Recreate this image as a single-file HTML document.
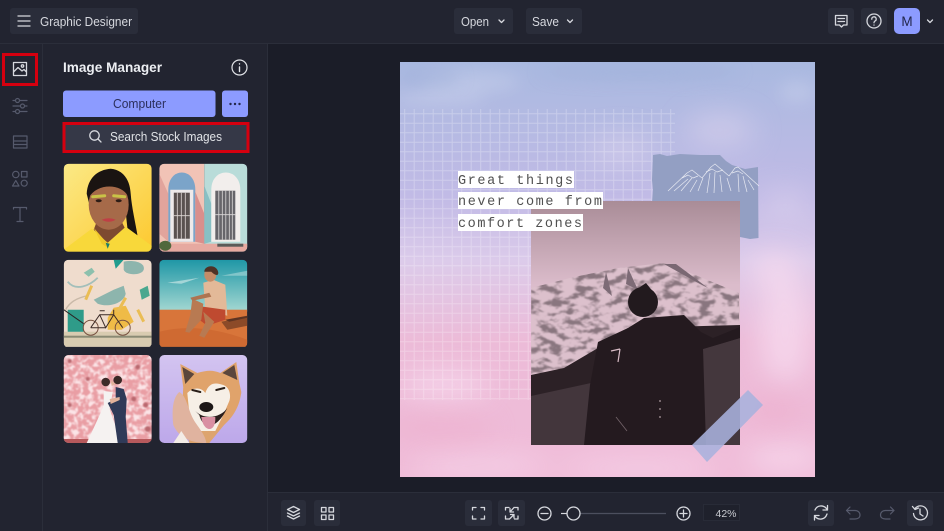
<!DOCTYPE html>
<html><head><meta charset="utf-8"><style>
html,body{margin:0;padding:0;background:#1b1d28;width:944px;height:531px;overflow:hidden}
svg{display:block}
text{font-family:"Liberation Sans",sans-serif}
.i{fill:none;stroke:#d6d8de;stroke-width:1.3;stroke-linecap:round;stroke-linejoin:round}
.d{fill:none;stroke:#565a6c;stroke-width:1.2;stroke-linecap:round;stroke-linejoin:round}
.b{fill:#2a2d3a}
</style></head><body>
<svg width="944" height="531" viewBox="0 0 944 531" xmlns="http://www.w3.org/2000/svg">
<defs>
<linearGradient id="bg" x1="0" y1="0" x2="0" y2="1"><stop offset="0" stop-color="#a9b9e0"/><stop offset=".33" stop-color="#c2bbe6"/><stop offset=".48" stop-color="#dccbea"/><stop offset=".67" stop-color="#ecbbd8"/><stop offset="1" stop-color="#f0bcd8"/></linearGradient>
<linearGradient id="ph" gradientUnits="userSpaceOnUse" x1="0" y1="201" x2="0" y2="285"><stop offset="0" stop-color="#a98c97"/><stop offset="1" stop-color="#dbbccb"/></linearGradient>
<linearGradient id="y1" x1="0" y1="0" x2="1" y2="1"><stop offset="0" stop-color="#fbe986"/><stop offset="1" stop-color="#fdc92f"/></linearGradient>
<linearGradient id="sky" x1="0" y1="0" x2="0" y2="1"><stop offset="0" stop-color="#1f97a6"/><stop offset="1" stop-color="#a5d8d2"/></linearGradient>
<linearGradient id="lav" x1="0" y1="0" x2="0" y2="1"><stop offset="0" stop-color="#d3c4f0"/><stop offset="1" stop-color="#bda8ea"/></linearGradient>
<pattern id="grid" width="9.500" height="9.500" patternUnits="userSpaceOnUse" x="400" y="109"><path d="M4.700 0V9.500M0 4.700H9.500" stroke="#fff" stroke-width="1" opacity=".26"/></pattern>
<filter id="b14" x="-50%" y="-50%" width="200%" height="200%"><feGaussianBlur stdDeviation="14"/></filter>
<filter id="b8" x="-50%" y="-50%" width="200%" height="200%"><feGaussianBlur stdDeviation="8"/></filter>
<filter id="b1"><feGaussianBlur stdDeviation=".7"/></filter>
<filter id="bs"><feGaussianBlur stdDeviation=".35"/></filter>
<filter id="rock" x="0" y="0" width="100%" height="100%"><feTurbulence type="fractalNoise" baseFrequency=".08 .15" numOctaves="3" seed="5"/><feColorMatrix values="0 0 0 0 .25  0 0 0 0 .18  0 0 0 0 .21  5 0 0 0 -2.300"/><feGaussianBlur stdDeviation=".5"/></filter>
<filter id="fl" x="0" y="0" width="100%" height="100%"><feTurbulence type="fractalNoise" baseFrequency=".2" numOctaves="2" seed="8"/><feColorMatrix values="0 0 0 0 .97  0 0 0 0 .78  0 0 0 0 .8  4 0 0 0 -1.700"/><feGaussianBlur stdDeviation=".4"/></filter>
<clipPath id="cv"><rect x="400" y="62" width="415" height="415"/></clipPath>
<clipPath id="cp"><rect x="531" y="201" width="209" height="244"/></clipPath>
<clipPath id="mc"><path d="M531 288L574 277L618 268L664 263L688 272L739 293V385H531Z"/></clipPath>
<clipPath id="t"><rect width="88" height="88" rx="5"/></clipPath>
</defs>

<!-- chrome -->
<rect width="944" height="531" fill="#1b1d28"/>
<rect width="944" height="43" fill="#222430"/>
<rect y="43" width="944" height="1" fill="#2b2e3a"/>
<rect y="44" width="42" height="487" fill="#222430"/>
<rect x="42" y="44" width="1" height="487" fill="#2b2e3a"/>
<rect x="43" y="44" width="224" height="487" fill="#222430"/>
<rect x="267" y="44" width="1" height="487" fill="#2b2e3a"/>
<rect x="268" y="493" width="676" height="38" fill="#222430"/>
<rect x="268" y="492" width="676" height="1" fill="#2b2e3a"/>

<!-- top bar -->
<rect class="b" x="10" y="8" width="128" height="26" rx="3"/>
<path class="i" d="M18 16H30M18 21H30M18 26H30"/>
<text x="40" y="26" font-size="13" fill="#d6d8de" textLength="92" lengthAdjust="spacingAndGlyphs">Graphic Designer</text>
<rect class="b" x="454" y="8" width="59" height="26" rx="3"/>
<text x="461" y="26" font-size="13" fill="#d6d8de" textLength="28" lengthAdjust="spacingAndGlyphs">Open</text>
<path class="i" d="M499 20L501.500 22.500L504 20"/>
<rect class="b" x="526" y="8" width="56" height="26" rx="3"/>
<text x="532" y="26" font-size="13" fill="#d6d8de" textLength="27" lengthAdjust="spacingAndGlyphs">Save</text>
<path class="i" d="M567.500 20L570 22.500L572.500 20"/>
<rect class="b" x="828" y="8" width="26" height="26" rx="3"/>
<path class="i" d="M835.500 15.500H847V25H843.500L841.500 27L839.500 25H835.500ZM838 18.500H844.500M838 21.500H844.500"/>
<rect class="b" x="861" y="8" width="26" height="26" rx="3"/>
<circle class="i" cx="874" cy="21" r="7"/>
<path class="i" d="M871.800 19.200A2.200 2.200 0 1 1 875 21C874.200 21.500 874 22 874 22.800M874 25V25.100"/>
<rect x="894" y="8" width="26" height="26" rx="5" fill="#8c9bff"/>
<text x="907" y="26" font-size="13.500" text-anchor="middle" fill="#22264a">M</text>
<path class="i" d="M927.500 20L930 22.500L932.500 20"/>

<!-- left rail -->
<path class="i" d="M13.500 62.500H26.500V75.500H13.500ZM13.500 72L18 67.500L22 71L24 69.500L26.500 72"/>
<circle class="i" cx="22.500" cy="66" r="1.200"/>
<rect x="3.500" y="54.500" width="33" height="30" fill="none" stroke="#d5000f" stroke-width="3"/>
<path class="d" d="M13 100.500H27M13 106H27M13 111.500H27"/>
<circle cx="17.500" cy="100.500" r="2" fill="#222430" stroke="#565a6c" stroke-width="1.200"/>
<circle cx="22.500" cy="106" r="2" fill="#222430" stroke="#565a6c" stroke-width="1.200"/>
<circle cx="17.500" cy="111.500" r="2" fill="#222430" stroke="#565a6c" stroke-width="1.200"/>
<path class="d" d="M13.500 136H27V148H13.500ZM13.500 141H27M13.500 144.500H27"/>
<circle class="d" cx="15.800" cy="174.500" r="3.200"/>
<rect class="d" x="21.500" y="171.500" width="5.500" height="5.500"/>
<path class="d" d="M15.800 180.500L19 186H12.500Z"/>
<circle class="d" cx="24.200" cy="183.200" r="3"/>
<path class="d" d="M13.500 209V207.500H26.500V209M20 207.500V221.500M17 221.500H23"/>

<!-- panel -->
<text x="63" y="72" font-size="13.500" font-weight="bold" fill="#eceef2" textLength="99" lengthAdjust="spacingAndGlyphs">Image Manager</text>
<circle cx="239.500" cy="67.500" r="7.500" fill="none" stroke="#e2e4e8" stroke-width="1.200"/>
<path d="M239.500 67V71.500M239.500 63.800V64" stroke="#e2e4e8" stroke-width="1.400" stroke-linecap="round"/>
<rect x="63" y="90.500" width="152.500" height="26.500" rx="3" fill="#8c9bff"/>
<text x="139.500" y="108" font-size="12.500" text-anchor="middle" fill="#2b2f5c" textLength="53" lengthAdjust="spacingAndGlyphs">Computer</text>
<rect x="222" y="90.500" width="26" height="26.500" rx="3" fill="#8c9bff"/>
<circle cx="230.500" cy="104" r="1.200" fill="#22264a"/><circle cx="235" cy="104" r="1.200" fill="#22264a"/><circle cx="239.500" cy="104" r="1.200" fill="#22264a"/>
<rect x="64" y="123.500" width="184" height="28" fill="#353847" stroke="#d5000f" stroke-width="3"/>
<circle class="i" cx="94.500" cy="135.500" r="4.700"/>
<path class="i" d="M98 139L101 142"/>
<text x="110" y="141" font-size="12.500" fill="#e0e2e6" textLength="112" lengthAdjust="spacingAndGlyphs">Search Stock Images</text>

<!-- T1 -->
<svg x="63.700" y="163.700" width="88" height="88" viewBox="0 0 88 88"><g clip-path="url(#t)">
<rect width="88" height="88" fill="url(#y1)"/>
<path d="M23 30C24 14 34 6 47 5C58 6 66 14 67 30C68 44 72 60 74 73L64 67L60 30H30L26 42Z" fill="#1a1412"/>
<path d="M33 58H58L62 66L44 80L30 66Z" fill="#7e4a30"/>
<path d="M0 86L28 65L44 79L62 63L88 82V88H0Z" fill="#f8d83a"/>
<path d="M30 64L43 79L44 84L38 80Z" fill="#f0c92a"/>
<ellipse cx="45" cy="41" rx="20" ry="25" fill="#a66a49"/>
<path d="M25 34C28 20 38 13 47 13C56 13 62 20 65 34C60 20 34 18 25 34Z" fill="#1a1412"/>
<path d="M29 33L41 32M50 32L61 33" stroke="#c9c247" stroke-width="3" stroke-linecap="round"/>
<ellipse cx="35" cy="37" rx="3" ry="1.500" fill="#2e1d16"/><ellipse cx="55" cy="37" rx="3" ry="1.500" fill="#2e1d16"/>
<path d="M38 56Q45 53 52 56Q45 60 38 56Z" fill="#bf3f45"/>
<path d="M44 85L42 79L46 80Z" fill="#1a7d6b"/>
</g></svg>

<!-- T2 -->
<svg x="159.300" y="163.700" width="88" height="88" viewBox="0 0 88 88"><g clip-path="url(#t)">
<rect width="45" height="88" fill="#f1c3b6"/><rect x="45" width="43" height="88" fill="#b9dcd9"/>
<rect y="80" width="88" height="8" fill="#e6a9a0"/>
<path d="M0 10L9 30V78L0 70Z" fill="#e2a49c"/>
<path d="M9 78V26C9 3 36 3 36 26V78Z" fill="#7ba4c9"/>
<path d="M11 78V26H34V78Z" fill="#eeeaea"/>
<rect x="14.500" y="29" width="16" height="46" fill="#5a5250"/>
<path d="M18 29V75M22 29V75M26 29V75M14.500 52H30.500" stroke="#ded7d4" stroke-width=".8"/>
<path d="M36 28L45 50V80L36 78Z" fill="#d98f8c"/>
<path d="M45 22L52 40V78L45 80Z" fill="#88c0c4"/>
<path d="M52 78V26C52 3 81 3 81 26V78Z" fill="#f2eeec"/>
<rect x="56" y="27" width="20" height="49" fill="#66656a"/>
<path d="M59.500 27V76M63 27V76M66.500 27V76M70 27V76M73 27V76M56 51H76" stroke="#dbd8d8" stroke-width=".8"/>
<ellipse cx="6" cy="82" rx="6" ry="5" fill="#50683d"/>
<rect x="58" y="80" width="26" height="3" fill="#5b5a58"/>
</g></svg>

<!-- T3 -->
<svg x="63.700" y="259.700" width="88" height="87" viewBox="0 0 88 87"><g clip-path="url(#t)">
<rect width="88" height="88" fill="#efdccd"/>
<rect y="72" width="88" height="16" fill="#d8cbb0"/><rect y="76" width="88" height="2" fill="#8a8a74"/>
<path d="M50 0H60L52 9Z" fill="#1f9c8e"/>
<path d="M60 2C68 0 82 2 80 10C78 16 62 16 60 10Z" fill="#8db5ad"/>
<path d="M30 40L50 30L60 26L62 34C60 44 44 48 34 44Z" fill="#8db5ad"/>
<path d="M20 13L28 8L31 12L25 17Z" fill="#8cc0ad"/>
<path d="M4 22C12 32 26 26 34 18" fill="none" stroke="#a3bfba" stroke-width="1.800"/>
<path d="M2 50C6 42 14 38 24 36" fill="none" stroke="#c9b9a8" stroke-width="1.500"/>
<path d="M4 50H20V72H4Z" fill="#2f9b89"/>
<path d="M44 58L50 48L62 46L70 62L58 70H44Z" fill="#efbb47"/>
<path d="M28 26L22 40M62 38L54 52M74 50L80 62" stroke="#eabd55" stroke-width="3"/>
<path d="M76 30L84 26L86 36L78 40Z" fill="#4aa88f"/>
<path d="M0 50L20 64" stroke="#2b2423" stroke-width="1"/>
<circle cx="27" cy="68" r="7.500" fill="none" stroke="#785241" stroke-width="1"/>
<circle cx="59" cy="68" r="7.500" fill="none" stroke="#785241" stroke-width="1"/>
<path d="M27 68L36 55H50L59 68M36 55L42 68L50 55M42 68H27M36 51H41M50 50L50 55" fill="none" stroke="#3b2a27" stroke-width="1"/>
</g></svg>

<!-- T4 -->
<svg x="159.300" y="259.700" width="88" height="87" viewBox="0 0 88 87"><g clip-path="url(#t)">
<rect width="88" height="52" fill="url(#sky)"/>
<path d="M8 23L40 18L22 24Z" fill="#c5e4e4" opacity=".7"/>
<path d="M62 16L88 11V16Z" fill="#bfe2e2" opacity=".5"/>
<rect y="50" width="88" height="38" fill="#d8753a"/>
<path d="M0 72Q40 62 88 80V88H0Z" fill="#cf6a32"/>
<path d="M62 62L88 57V66L68 70Z" fill="#8c4a28"/>
<path d="M66 60L88 56V58L70 62Z" fill="#5e3422"/>
<path d="M44 23L54 20L66 25L68 56L46 50Z" fill="#e3b998"/>
<path d="M37 46L66 50L66 60L48 66L40 60Z" fill="#bf4a30"/>
<path d="M33 39L44 44L42 60L30 73L26 72L31 55Z" fill="#b87a52"/>
<path d="M44 52L55 62L45 78L40 76L46 63Z" fill="#b87a52"/>
<path d="M31 38L50 33L52 37L33 41Z" fill="#ae7450"/>
<ellipse cx="51" cy="15" rx="6" ry="7" fill="#c58c68"/>
<path d="M45 12C45 5 58 4 59 13C59 17 55 15 52 12Z" fill="#4e3226"/>
</g></svg>

<!-- T5 -->
<svg x="63.700" y="355" width="88" height="88" viewBox="0 0 88 88"><g clip-path="url(#t)">
<rect width="88" height="88" fill="#e99ea4"/>
<rect width="88" height="88" filter="url(#fl)"/>
<g fill="#b9686e" filter="url(#b1)"><circle cx="24" cy="24" r="2"/><circle cx="6" cy="6" r="2"/><circle cx="74" cy="12" r="2.500"/><circle cx="82" cy="50" r="2.500"/><circle cx="6" cy="50" r="2"/><circle cx="70" cy="44" r="2.500"/><circle cx="84" cy="74" r="3"/></g>
<rect y="84" width="88" height="4" fill="#b7595c"/>
<path d="M40 36L49 37L46 54L52 72L58 88H23L36 60L40 50Z" fill="#f5f2f1"/>
<path d="M52 32L60 34L63 44L62 62L64 88H54L50 60L44 48L52 44Z" fill="#2f3a58"/>
<path d="M46 44L56 42L56 45L47 49Z" fill="#e2b29b"/>
<circle cx="42" cy="27" r="4.300" fill="#3e2a28"/>
<circle cx="54" cy="25" r="4.300" fill="#392926"/>
<path d="M47 25L52 29L48 31Z" fill="#e2b29b"/>
</g></svg>

<!-- T6 -->
<svg x="159.300" y="355" width="88" height="88" viewBox="0 0 88 88"><g clip-path="url(#t)">
<rect width="88" height="88" fill="url(#lav)"/>
<path d="M24 55L30 88H50L68 66L82 38L24 33Z" fill="#dda46e"/>
<path d="M21 9L38 18C48 15 54 15 61 18L77 7L80 28L82 37C80 55 70 68 56 76H38C28 68 22 50 24 33Z" fill="#e0a36b"/>
<path d="M23 12L35 19L26 29Z" fill="#5b463c"/><path d="M75 10L63 18L78 25Z" fill="#5b463c"/>
<path d="M28 38C34 32 42 32 46 38C50 26 58 28 64 30C70 32 72 40 70 46L64 60L56 76H38L30 58Z" fill="#f6efe6"/>
<path d="M33 35L41 37M57 35L65 33" stroke="#2a1e18" stroke-width="2" stroke-linecap="round"/>
<ellipse cx="47" cy="52" rx="7" ry="5" fill="#1c1616"/>
<path d="M40 60C44 76 58 74 68 53C62 62 46 66 36 56Z" fill="#2a1e1c"/>
<path d="M42 62L56 62C57 78 44 78 42 62Z" fill="#d98fa2"/>
<path d="M20 37C12 44 13 60 14 70C20 84 34 88 47 88C46 78 36 70 32 60C28 50 26 40 20 37Z" fill="#e0b39f"/>
<path d="M22 76L14 88H30Z" fill="#f3ece6"/>
</g></svg>

<!-- canvas -->
<g clip-path="url(#cv)">
<rect x="400" y="62" width="415" height="415" fill="url(#bg)"/>
<g fill="#d4daf0" opacity=".35" filter="url(#b8)"><ellipse cx="470" cy="82" rx="50" ry="11"/><ellipse cx="440" cy="98" rx="45" ry="8"/><ellipse cx="797" cy="92" rx="18" ry="11"/></g>
<g fill="#9daed8" opacity=".5" filter="url(#b8)"><ellipse cx="430" cy="78" rx="30" ry="8"/><ellipse cx="640" cy="72" rx="100" ry="8"/></g>
<g fill="#e4d9f0" opacity=".5" filter="url(#b14)"><ellipse cx="720" cy="130" rx="35" ry="16"/><ellipse cx="785" cy="205" rx="26" ry="14"/><ellipse cx="620" cy="150" rx="35" ry="14"/></g>
<g fill="#f8dcf0" opacity=".75" filter="url(#b14)"><ellipse cx="445" cy="385" rx="45" ry="14"/><ellipse cx="785" cy="330" rx="26" ry="55"/><ellipse cx="775" cy="270" rx="26" ry="18"/><ellipse cx="480" cy="466" rx="70" ry="9"/><ellipse cx="640" cy="468" rx="80" ry="8"/><ellipse cx="785" cy="458" rx="40" ry="14"/></g>
<g fill="#eca8c6" opacity=".4" filter="url(#b14)"><ellipse cx="440" cy="428" rx="55" ry="14"/><ellipse cx="775" cy="410" rx="26" ry="18"/></g>
<rect x="400" y="109" width="275" height="291" fill="url(#grid)" filter="url(#bs)"/>

<!-- torn paper -->
<path d="M653 155L660 154L667 156L680 154L700 155L720 155L726 161L732 165L745 169L758 167L758.500 238L750 239L735 236L700 230L652 203L653 190L652 180Z" fill="#939fc3"/>
<g fill="none" stroke="#f0f1f7" stroke-width=".7" stroke-linejoin="round" opacity=".9">
<path d="M668 191L687 173L692 170L702 178M702 178L711 167L715 164L729 176M729 176L735 168L738 167L759 186"/>
<path d="M682 178L688 175L693 178L698 176M706 172L712 169L717 172L723 170M732 173L738 171L743 174"/>
<path d="M674 191L688 179M681 191L692 178M690 192L697 180M698 191L703 178M707 193L710 173M714 193L715 172M722 192L720 175M731 191L727 178M739 192L738 174M747 192L743 176M754 190L748 180"/>
</g>

<!-- photo -->
<rect x="531" y="201" width="209" height="244" fill="url(#ph)"/>
<g clip-path="url(#cp)">
<path d="M531 288L574 277L618 268L664 263L688 272L739 293L740 385H531Z" fill="#dcc0cc"/>
<rect x="531" y="262" width="209" height="125" filter="url(#rock)" clip-path="url(#mc)"/>
<path d="M664 264L676 264L708 288L700 284Z" fill="#7a6873"/>
<path d="M606 272L612 296L603 288ZM628 268L638 290L626 284Z" fill="#7d6b76"/>
<path d="M531 375L564 368L598 348L628 328L740 325V445H531Z" fill="#2c2126"/>
<path d="M531 396L591 383L585 445H531Z" fill="#43363c"/>
<path d="M703 349L740 338V445H704Z" fill="#44373d"/>
<path d="M584 445L590 385L598 342L628 328L644 318L684 315L701 332L713 338L740 327V338L703 349L706 445Z" fill="#241a1f"/>
<circle cx="643" cy="302" r="15" fill="#221a1e"/>
<path d="M631 293L646 283L654 293Z" fill="#221a1e"/>
<path d="M611 351L620 349M620 349L618 362" fill="none" stroke="#d8bcc6" stroke-width="1.200"/>
<path d="M660 400V402M660 408V410M660 416V418" stroke="#8a7b80" stroke-width="1.600"/>
<path d="M616 417L627 431" stroke="#75656b" stroke-width=".8"/>
</g>

<!-- tape -->
<path d="M748 390L763 405L707 462L692 445Z" fill="#a9b2dd" opacity=".88"/>

<!-- text -->
<rect x="458" y="171" width="116" height="17" fill="#fff"/>
<rect x="458" y="192" width="145" height="17" fill="#fff"/>
<rect x="458" y="214" width="125" height="17" fill="#fff"/>
<g font-size="13.500" fill="#505050">
<text x="458" y="184" style="font-family:'Liberation Mono',monospace" textLength="115">Great things</text>
<text x="458" y="205" style="font-family:'Liberation Mono',monospace" textLength="144">never come from</text>
<text x="458" y="227" style="font-family:'Liberation Mono',monospace" textLength="124">comfort zones</text>
</g>
</g>

<!-- bottom bar -->
<rect class="b" x="281" y="500" width="25" height="26" rx="3"/>
<path class="i" d="M293.500 506.500L299.500 509.500L293.500 512.500L287.500 509.500ZM287.500 513L293.500 516L299.500 513M287.500 516L293.500 519L299.500 516"/>
<rect class="b" x="314" y="500" width="26" height="26" rx="3"/>
<path class="i" d="M321.500 507.500H326V512H321.500ZM329 507.500H333.500V512H329ZM321.500 515H326V519.500H321.500ZM329 515H333.500V519.500H329Z"/>
<rect class="b" x="465" y="500" width="27" height="26" rx="3"/>
<path class="i" d="M472.500 510V507.500H476M481 507.500H484.500V510M484.500 516V519H481M476 519H472.500V516"/>
<rect class="b" x="498" y="500" width="27" height="26" rx="3"/>
<path class="i" d="M505.500 510V507.500H509M514.500 507.500H518V510M518 516V519H514.500M509 519H505.500V516M510 512L514 507.500M510 508.500V512H513.500M514 514.500L509.500 519M514 518V514.500H510.500"/>
<circle class="i" cx="544.500" cy="513.500" r="6.500"/><path class="i" d="M541 513.500H548"/>
<path d="M561 513.500H567" stroke="#d6d8de" stroke-width="1.200"/>
<path d="M580 513.500H666" stroke="#4c4f5e" stroke-width="1.200"/>
<circle class="i" cx="573.500" cy="513.500" r="6.500"/>
<circle class="i" cx="683.500" cy="513.500" r="6.500"/><path class="i" d="M680 513.500H687M683.500 510V517"/>
<rect x="703.500" y="504.500" width="36" height="16" fill="#1f212c" stroke="#282b37"/>
<text x="726" y="517" font-size="10.500" text-anchor="middle" fill="#c8cad0">42%</text>
<rect class="b" x="808" y="500" width="26" height="26" rx="3"/>
<path class="i" d="M815 510C817 505 823 505 826 508L827.500 510M827 514C825 520 819 520 816 517.500L814.500 515.500M827.500 505.500V510H823M814.500 520V515.500H819"/>
<path class="d" d="M846.500 510.500H855C858 510.500 860 512.500 860 515C860 517.500 858 519 855 519H850M850 507L846.500 510.500L850 514"/>
<path class="d" d="M894 510.500H885.500C882.500 510.500 880.500 512.500 880.500 515C880.500 517.500 882.500 519 885.500 519H890M890.500 507L894 510.500L890.500 514"/>
<rect class="b" x="907" y="500" width="26" height="26" rx="3"/>
<path class="i" d="M915 508.500A7 7 0 1 1 913.500 513.500M912.500 506.500L915 509.500L918.500 508M920 509V514L923 516"/>
</svg>
</body></html>
